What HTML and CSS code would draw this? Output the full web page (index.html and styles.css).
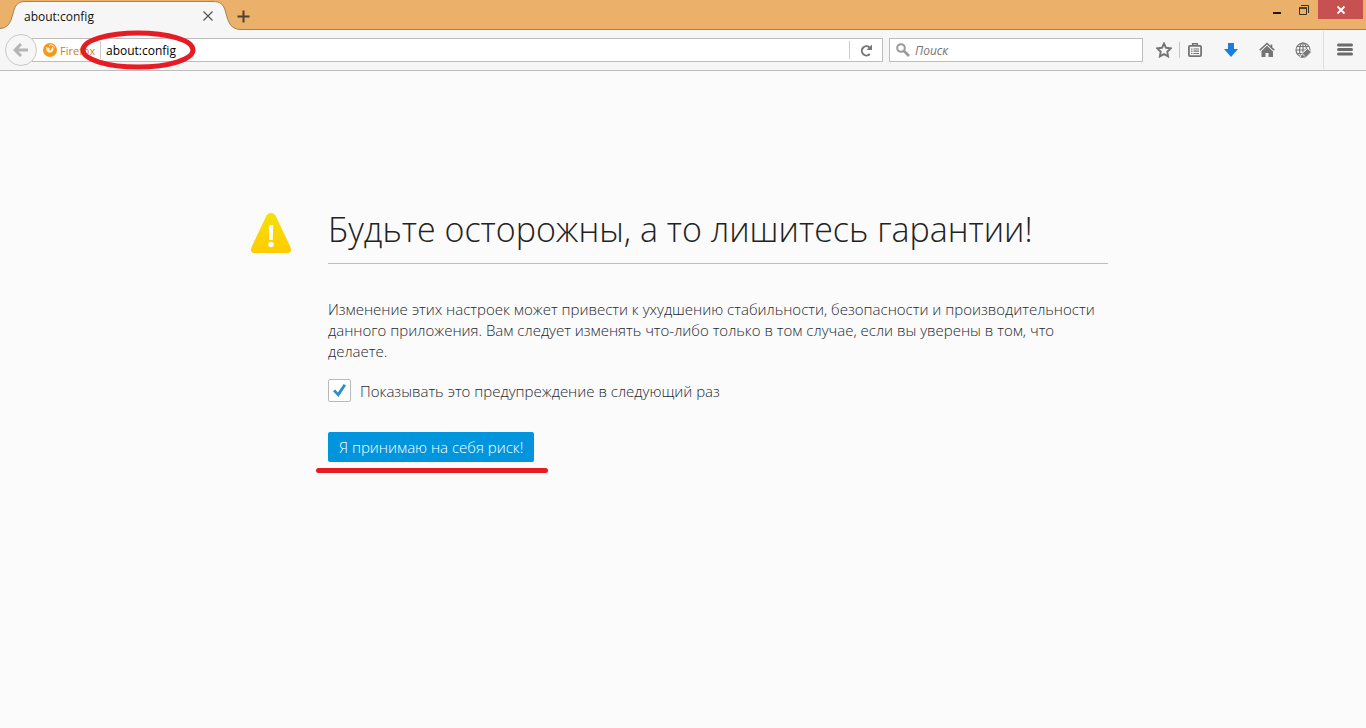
FILE: index.html
```html
<!DOCTYPE html>
<html lang="ru">
<head>
<meta charset="utf-8">
<meta name="viewport" content="width=device-width, initial-scale=1">
<title>about:config</title>
<link rel="stylesheet" href="styles.css">
</head>
<body>
<header class="titlebar">
  <div class="tab">
    <svg class="tab-shape" viewBox="0 0 240 30" aria-hidden="true">
      <path d="M0 30V28.500C7 28 10 24 12 17L14 10C16 4 19 1.500 25 1.500H213C220 1.500 223 4 225 10L227 17C229 24 232 28.500 239 29.500V30Z" fill="#f6f6f6"/>
      <path d="M0 28.500C7 28 10 24 12 17L14 10C16 4 19 1.500 25 1.500H213C220 1.500 223 4 225 10L227 17C229 24 232 29 240 29.500" fill="none" stroke="#a5834f"/>
    </svg>
    <span class="tab-title">about:config</span>
    <button class="tab-close" aria-label="Закрыть вкладку"><svg width="12" height="12" viewBox="0 0 12 12"><path d="M1.500 1.500l9 9m0-9l-9 9" stroke="#555" stroke-width="1.200"/></svg></button>
  </div>
  <button class="new-tab" aria-label="Новая вкладка"><svg width="13" height="13" viewBox="0 0 13 13"><path d="M6.500 .5v12M.5 6.500h12" stroke="#4d4231" stroke-width="2"/></svg></button>
  <div class="window-buttons">
    <button class="win" aria-label="Свернуть"><svg width="10" height="14" viewBox="0 0 10 14"><path d="M1 10h8" stroke="#221c12" stroke-width="2"/></svg></button>
    <button class="win" aria-label="Восстановить"><svg width="12" height="12" viewBox="0 0 12 12" fill="none" stroke="#3a2e1c"><path d="M3 1.500h7.500V9"/><path d="M1.500 4h7v6.500h-7z"/><path d="M1 4h8" stroke-width="1.500"/></svg></button>
    <button class="win win-close" aria-label="Закрыть"><svg width="10" height="10" viewBox="0 0 10 10"><path d="M1.500 1.500l7 7m0-7l-7 7" stroke="#fff" stroke-width="1.800"/></svg></button>
  </div>
</header>
<nav class="toolbar">
  <button class="back" aria-label="Назад"><svg width="16" height="14" viewBox="0 0 16 14"><path d="M8 1L2 7l6 6M2.500 7H15" fill="none" stroke="#b5b5b5" stroke-width="3"/></svg></button>
  <div class="urlbar">
    <span class="identity">
      <svg width="14" height="14" viewBox="0 0 14 14"><circle cx="7" cy="7" r="7" fill="#f3991e"/><path d="M3.200 4C3 8 4.500 9.500 7 9.500 9.500 9.500 11 7.500 10.300 5L9 3.500 8.800 5.500 7.500 7.500 5.800 7 7 6 5.500 4.500 4.500 4.800Z" fill="#fff3dc"/><path d="M6 2.500C8 1 11 2.500 11.500 4.500" fill="none" stroke="#fff3dc"/></svg>
      <span>Firefox</span>
    </span>
    <input class="address" type="text" value="about:config" aria-label="Адрес">
    <button class="reload" aria-label="Обновить"><svg width="13" height="13" viewBox="0 0 13 13"><path d="M9.800 10A4.600 4.600 0 1 1 9.500 3.400" fill="none" stroke="#777" stroke-width="2"/><path d="M12 .5V6H6.500Z" fill="#777"/></svg></button>
    <svg class="mark-ring" viewBox="0 0 116 40" aria-hidden="true"><ellipse cx="58" cy="20" rx="55" ry="17" fill="none" stroke="#e51c24" stroke-width="5"/></svg>
  </div>
  <div class="search">
    <svg width="14" height="14" viewBox="0 0 14 14" fill="none" stroke="#999"><circle cx="5" cy="5" r="3.800" stroke-width="2"/><path d="M8 8l5 5" stroke-width="2.600"/></svg>
    <input type="text" placeholder="Поиск" aria-label="Поиск">
  </div>
  <div class="actions">
    <button class="action star" aria-label="Добавить закладку"><svg width="16" height="16" viewBox="0 0 16 16"><path d="M8 1.500l2 4.300 4.700.6-3.400 3.300.8 4.700L8 12.100l-4.100 2.300.8-4.700L1.300 6.400 6 5.800z" fill="none" stroke="#757575" stroke-width="1.900"/></svg></button>
    <button class="action list" aria-label="Закладки"><svg width="16" height="16" viewBox="0 0 16 16" fill="none" stroke="#757575"><rect x="1.900" y="3.900" width="12.200" height="10.200" rx="1" stroke-width="1.800"/><path d="M5.700 4V1.800h4.600V4" stroke-width="1.600"/><path d="M4 7h1.500m1 0H12M4 9.200h1.500m1 0H12M4 11.500h1.500m1 0H12" stroke-width="1.200"/></svg></button>
    <button class="action" aria-label="Загрузки"><svg width="16" height="16" viewBox="0 0 16 16"><path d="M5 1h6v6h4l-7 8-7-8h4z" fill="#1d7ddd"/></svg></button>
    <button class="action" aria-label="Домой"><svg width="16" height="16" viewBox="0 0 16 16"><path d="M8 3.800L14 9.500V15H9.500v-4h-3v4H2.500V9z" fill="#757575"/><path d="M.8 8.200L8 1.500l7.200 6.700M12.500 5V2.500" fill="none" stroke="#757575" stroke-width="1.600"/></svg></button>
    <button class="action" aria-label="Веб-инструменты"><svg width="17" height="17" viewBox="0 0 17 17"><g fill="none" stroke="#777" stroke-width="1.200"><circle cx="8" cy="8" r="7"/><ellipse cx="8" cy="8" rx="3.500" ry="7"/><path d="M8 1v14M1 8h14M2 4.500h12M2 11.500h12"/></g><path d="M4.500 16.500l2-4.500 6-5.500 4 3.500-6 6z" fill="#777" stroke="#f6f6f6"/><path d="M7.500 12l2.500 2.500" stroke="#f6f6f6"/></svg></button>
    <button class="action menu" aria-label="Меню"><svg width="16" height="14" viewBox="0 0 16 14"><path d="M1.500 2h13M1.500 6.500h13M1.500 11h13" stroke="#6b6b6b" stroke-width="3" stroke-linecap="round"/></svg></button>
  </div>
</nav>
<main class="warning">
  <svg class="warning-icon" width="42" height="42" viewBox="0 0 42 42" aria-hidden="true">
    <defs><linearGradient id="amber" x2="0" y2="1"><stop stop-color="#f4e00c"/><stop offset="1" stop-color="#ffcb00"/></linearGradient></defs>
    <path d="M16.500 3.500Q21-2 25.500 3.500L40 34Q43 41 37 41H5Q-1 41 2 34Z" fill="url(#amber)"/>
    <path d="M18.800 13h4.400l-.5 15h-3.400z" fill="#fff"/><circle cx="21" cy="32.500" r="2.700" fill="#fff"/>
  </svg>
  <div class="warning-body">
    <h1>Будьте осторожны, а то лишитесь гарантии!</h1>
    <p>Изменение этих настроек может привести к ухудшению стабильности, безопасности и производительности данного приложения. Вам следует изменять что-либо только в том случае, если вы уверены в том, что делаете.</p>
    <label class="check"><input type="checkbox" checked><span>Показывать это предупреждение в следующий раз</span></label>
    <div class="accept">
      <button class="primary">Я принимаю на себя риск!</button>
      <div class="mark-line"></div>
    </div>
  </div>
</main>
</body>
</html>
```
FILE: styles.css
```css
* { box-sizing: border-box; }
body {
  margin: 0;
  background: #fbfbfb;
  color: #1e2832;
  font-family: "Open Sans", "Noto Sans", sans-serif;
  font-size: 15px;
  font-weight: 300;
}
button { border: 0; padding: 0; background: none; font: inherit; color: inherit; }
button, .action { display: flex; align-items: center; justify-content: center; }
svg { display: block; flex: none; }
input { font: inherit; }

.titlebar {
  display: flex;
  height: 30px;
  background: #ebb16a;
  box-shadow: inset 0 -1px #a5834f;
}
.tab {
  position: relative;
  display: flex;
  align-items: center;
  width: 236px;
  padding: 2px 20px 0 24px;
  font-size: 12px;
  font-weight: 400;
  color: #111;
}
.tab-shape { position: absolute; top: 0; left: 0; width: 240px; height: 30px; }
.tab-title { position: relative; flex: 1; }
.tab-close { position: relative; width: 16px; height: 16px; }
.new-tab { width: 14px; height: 32px; }
.window-buttons { display: flex; margin-left: auto; padding-right: 3px; }
.win { width: 27px; height: 19px; }
.win-close { width: 45px; margin-left: 1px; background: #c75050; }

.toolbar {
  display: flex;
  align-items: center;
  height: 41px;
  padding-left: 5px;
  background: #f6f6f6;
  border-bottom: 1px solid #bdbdbd;
  font-weight: 400;
}
.back {
  position: relative;
  z-index: 1;
  width: 32px;
  height: 32px;
  border: 1px solid #c9c9c9;
  border-radius: 50%;
  background: #f6f6f6;
}
.urlbar {
  position: relative;
  display: flex;
  flex: 1;
  height: 24px;
  margin-left: -5px;
  padding-left: 10px;
  border: 1px solid #bdbdbd;
  background: #fff;
  font-size: 12px;
}
.identity {
  display: flex;
  align-items: center;
  gap: 3px;
  width: 58px;
  margin: 2px 0;
  border-right: 1px solid #ccc;
  color: #cf7c24;
  font-size: 11px;
}
.address {
  flex: 1;
  min-width: 0;
  padding: 0 5px;
  border: 0;
  outline: 0;
  background: none;
  color: #000;
}
.reload { width: 33px; margin: 2px 0; border-left: 1px solid #ccc; }
.mark-ring { position: absolute; left: 47px; top: -9px; width: 116px; height: 40px; }
.search {
  display: flex;
  align-items: center;
  gap: 5px;
  width: 254px;
  height: 24px;
  margin: 0 8px 0 6px;
  padding-left: 6px;
  border: 1px solid #bdbdbd;
  background: #fff;
}
.search input {
  flex: 1;
  min-width: 0;
  padding: 0;
  border: 0;
  outline: 0;
  background: none;
  font-size: 12px;
  font-style: italic;
}
.search input::placeholder { color: #757575; }
.actions { display: flex; }
.action { width: 36px; height: 38px; }
.star { width: 26px; }
.list {
  background: linear-gradient(#c4c4c4, #c4c4c4) 2px center / 1px 16px no-repeat;
}
.menu { width: 43px; margin-left: 2px; border-left: 1px solid #ddd; }

.warning {
  display: flex;
  gap: 36px;
  width: 100%;
  max-width: 866px;
  margin: 0 auto;
  padding: 134px 8px 24px 0;
}
.warning-icon { margin-top: 7px; }
.warning-body { flex: 1; min-width: 0; }
h1 {
  margin: 0;
  padding-bottom: 10px;
  border-bottom: 1px solid #bdbdbd;
  color: #222;
  font-size: 34px;
  font-weight: 300;
  line-height: 48px;
}
p { margin: 35px 0 17px; line-height: 21px; }
.check { display: flex; align-items: center; gap: 9px; width: fit-content; }
.check input {
  appearance: none;
  width: 23px;
  height: 23px;
  margin: 0;
  border: 1px solid #b9b9b9;
  border-radius: 2px;
  background: #fff;
}
.check input:checked::before {
  content: "";
  display: block;
  width: 13px;
  height: 13px;
  margin: 4px;
  background: #2a8fcc;
  clip-path: polygon(0 55%, 16% 42%, 38% 66%, 82% 0, 100% 12%, 42% 100%);
}
.accept { width: 232px; margin: 30px 0 0 -12px; }
.primary {
  height: 30px;
  margin-left: 12px;
  padding: 0 11px;
  border-radius: 2px;
  background: #0095dd;
  color: #fff;
}
.mark-line { height: 5px; margin-top: 6px; border-radius: 3px; background: #e51c24; }
```
